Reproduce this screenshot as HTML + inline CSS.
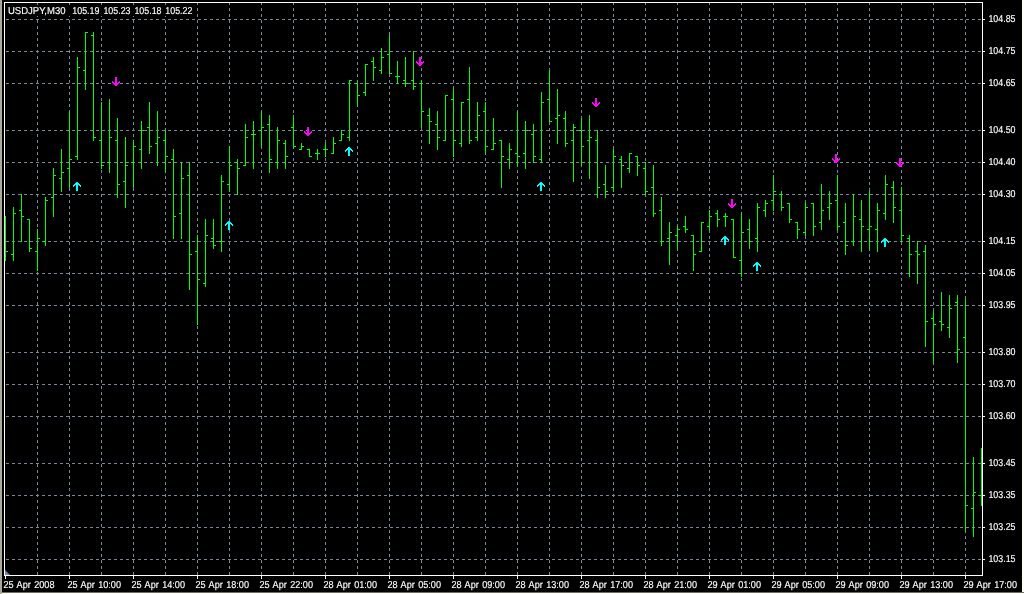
<!DOCTYPE html>
<html lang="en"><head><meta charset="utf-8"><title>USDJPY,M30</title>
<style>html,body{margin:0;padding:0;background:#000;overflow:hidden}svg{display:block}text{font-family:"Liberation Sans",sans-serif;font-size:10px;fill:#fff;stroke:#fff;stroke-width:0.15px}</style></head><body>
<svg width="1024" height="594" viewBox="0 0 1024 594" shape-rendering="crispEdges">
<rect x="0" y="0" width="1024" height="594" fill="#000"/>
<rect x="0" y="0" width="2" height="594" fill="#aca899"/>
<rect x="1022" y="0" width="2" height="594" fill="#fffff4"/>
<rect x="2" y="592" width="1022" height="1" fill="#6e6e68"/>
<rect x="2" y="593" width="1022" height="1" fill="#fffff4"/>
<g stroke="#778899" stroke-width="1" stroke-dasharray="3 3" fill="none">
<line x1="6" y1="19.5" x2="982" y2="19.5"/>
<line x1="6" y1="51.5" x2="982" y2="51.5"/>
<line x1="6" y1="83.5" x2="982" y2="83.5"/>
<line x1="6" y1="130.5" x2="982" y2="130.5"/>
<line x1="6" y1="162.5" x2="982" y2="162.5"/>
<line x1="6" y1="194.5" x2="982" y2="194.5"/>
<line x1="6" y1="241.5" x2="982" y2="241.5"/>
<line x1="6" y1="273.5" x2="982" y2="273.5"/>
<line x1="6" y1="305.5" x2="982" y2="305.5"/>
<line x1="6" y1="352.5" x2="982" y2="352.5"/>
<line x1="6" y1="384.5" x2="982" y2="384.5"/>
<line x1="6" y1="416.5" x2="982" y2="416.5"/>
<line x1="6" y1="463.5" x2="982" y2="463.5"/>
<line x1="6" y1="495.5" x2="982" y2="495.5"/>
<line x1="6" y1="527.5" x2="982" y2="527.5"/>
<line x1="6" y1="559.5" x2="982" y2="559.5"/>
<line x1="37.5" y1="2" x2="37.5" y2="575"/>
<line x1="69.5" y1="2" x2="69.5" y2="575"/>
<line x1="101.5" y1="2" x2="101.5" y2="575"/>
<line x1="133.5" y1="2" x2="133.5" y2="575"/>
<line x1="165.5" y1="2" x2="165.5" y2="575"/>
<line x1="197.5" y1="2" x2="197.5" y2="575"/>
<line x1="229.5" y1="2" x2="229.5" y2="575"/>
<line x1="261.5" y1="2" x2="261.5" y2="575"/>
<line x1="293.5" y1="2" x2="293.5" y2="575"/>
<line x1="325.5" y1="2" x2="325.5" y2="575"/>
<line x1="357.5" y1="2" x2="357.5" y2="575"/>
<line x1="389.5" y1="2" x2="389.5" y2="575"/>
<line x1="421.5" y1="2" x2="421.5" y2="575"/>
<line x1="453.5" y1="2" x2="453.5" y2="575"/>
<line x1="485.5" y1="2" x2="485.5" y2="575"/>
<line x1="517.5" y1="2" x2="517.5" y2="575"/>
<line x1="549.5" y1="2" x2="549.5" y2="575"/>
<line x1="581.5" y1="2" x2="581.5" y2="575"/>
<line x1="613.5" y1="2" x2="613.5" y2="575"/>
<line x1="645.5" y1="2" x2="645.5" y2="575"/>
<line x1="677.5" y1="2" x2="677.5" y2="575"/>
<line x1="709.5" y1="2" x2="709.5" y2="575"/>
<line x1="741.5" y1="2" x2="741.5" y2="575"/>
<line x1="773.5" y1="2" x2="773.5" y2="575"/>
<line x1="805.5" y1="2" x2="805.5" y2="575"/>
<line x1="837.5" y1="2" x2="837.5" y2="575"/>
<line x1="869.5" y1="2" x2="869.5" y2="575"/>
<line x1="901.5" y1="2" x2="901.5" y2="575"/>
<line x1="933.5" y1="2" x2="933.5" y2="575"/>
<line x1="965.5" y1="2" x2="965.5" y2="575"/>
</g>
<g fill="#00ff00">
<rect x="5" y="216" width="1" height="45"/>
<rect x="6" y="251" width="2" height="1"/>
<rect x="13" y="207" width="1" height="54"/>
<rect x="11" y="254" width="2" height="1"/>
<rect x="14" y="213" width="2" height="1"/>
<rect x="21" y="194" width="1" height="48"/>
<rect x="19" y="210" width="2" height="1"/>
<rect x="22" y="216" width="2" height="1"/>
<rect x="29" y="219" width="1" height="33"/>
<rect x="27" y="219" width="2" height="1"/>
<rect x="30" y="248" width="2" height="1"/>
<rect x="37" y="229" width="1" height="42"/>
<rect x="35" y="251" width="2" height="1"/>
<rect x="38" y="238" width="2" height="1"/>
<rect x="45" y="197" width="1" height="49"/>
<rect x="43" y="241" width="2" height="1"/>
<rect x="46" y="200" width="2" height="1"/>
<rect x="53" y="168" width="1" height="49"/>
<rect x="51" y="197" width="2" height="1"/>
<rect x="54" y="175" width="2" height="1"/>
<rect x="61" y="149" width="1" height="43"/>
<rect x="59" y="178" width="2" height="1"/>
<rect x="62" y="172" width="2" height="1"/>
<rect x="69" y="111" width="1" height="77"/>
<rect x="67" y="168" width="2" height="1"/>
<rect x="70" y="159" width="2" height="1"/>
<rect x="77" y="57" width="1" height="103"/>
<rect x="75" y="156" width="2" height="1"/>
<rect x="78" y="67" width="2" height="1"/>
<rect x="85" y="32" width="1" height="58"/>
<rect x="83" y="70" width="2" height="1"/>
<rect x="86" y="32" width="2" height="1"/>
<rect x="93" y="32" width="1" height="109"/>
<rect x="91" y="35" width="2" height="1"/>
<rect x="94" y="137" width="2" height="1"/>
<rect x="101" y="102" width="1" height="67"/>
<rect x="99" y="140" width="2" height="1"/>
<rect x="102" y="165" width="2" height="1"/>
<rect x="109" y="99" width="1" height="74"/>
<rect x="107" y="162" width="2" height="1"/>
<rect x="110" y="137" width="2" height="1"/>
<rect x="117" y="118" width="1" height="80"/>
<rect x="115" y="140" width="2" height="1"/>
<rect x="118" y="184" width="2" height="1"/>
<rect x="125" y="137" width="1" height="71"/>
<rect x="123" y="181" width="2" height="1"/>
<rect x="126" y="165" width="2" height="1"/>
<rect x="133" y="140" width="1" height="48"/>
<rect x="131" y="162" width="2" height="1"/>
<rect x="134" y="146" width="2" height="1"/>
<rect x="141" y="121" width="1" height="48"/>
<rect x="139" y="149" width="2" height="1"/>
<rect x="142" y="130" width="2" height="1"/>
<rect x="149" y="102" width="1" height="52"/>
<rect x="147" y="127" width="2" height="1"/>
<rect x="150" y="146" width="2" height="1"/>
<rect x="157" y="111" width="1" height="55"/>
<rect x="155" y="143" width="2" height="1"/>
<rect x="158" y="137" width="2" height="1"/>
<rect x="165" y="130" width="1" height="43"/>
<rect x="163" y="140" width="2" height="1"/>
<rect x="166" y="156" width="2" height="1"/>
<rect x="173" y="149" width="1" height="90"/>
<rect x="171" y="159" width="2" height="1"/>
<rect x="174" y="216" width="2" height="1"/>
<rect x="181" y="162" width="1" height="77"/>
<rect x="179" y="213" width="2" height="1"/>
<rect x="182" y="178" width="2" height="1"/>
<rect x="189" y="162" width="1" height="128"/>
<rect x="187" y="175" width="2" height="1"/>
<rect x="190" y="254" width="2" height="1"/>
<rect x="197" y="235" width="1" height="90"/>
<rect x="195" y="251" width="2" height="1"/>
<rect x="198" y="279" width="2" height="1"/>
<rect x="205" y="219" width="1" height="68"/>
<rect x="203" y="283" width="2" height="1"/>
<rect x="206" y="235" width="2" height="1"/>
<rect x="213" y="219" width="1" height="30"/>
<rect x="211" y="238" width="2" height="1"/>
<rect x="214" y="245" width="2" height="1"/>
<rect x="221" y="175" width="1" height="77"/>
<rect x="219" y="241" width="2" height="1"/>
<rect x="222" y="181" width="2" height="1"/>
<rect x="229" y="146" width="1" height="46"/>
<rect x="227" y="184" width="2" height="1"/>
<rect x="230" y="165" width="2" height="1"/>
<rect x="237" y="159" width="1" height="36"/>
<rect x="235" y="162" width="2" height="1"/>
<rect x="238" y="168" width="2" height="1"/>
<rect x="245" y="124" width="1" height="42"/>
<rect x="243" y="165" width="2" height="1"/>
<rect x="246" y="137" width="2" height="1"/>
<rect x="253" y="121" width="1" height="48"/>
<rect x="251" y="134" width="2" height="1"/>
<rect x="254" y="134" width="2" height="1"/>
<rect x="261" y="111" width="1" height="36"/>
<rect x="259" y="130" width="2" height="1"/>
<rect x="262" y="127" width="2" height="1"/>
<rect x="269" y="115" width="1" height="58"/>
<rect x="267" y="124" width="2" height="1"/>
<rect x="270" y="159" width="2" height="1"/>
<rect x="277" y="127" width="1" height="42"/>
<rect x="275" y="162" width="2" height="1"/>
<rect x="278" y="140" width="2" height="1"/>
<rect x="285" y="140" width="1" height="29"/>
<rect x="283" y="143" width="2" height="1"/>
<rect x="286" y="156" width="2" height="1"/>
<rect x="293" y="115" width="1" height="32"/>
<rect x="291" y="127" width="2" height="1"/>
<rect x="294" y="146" width="2" height="1"/>
<rect x="301" y="143" width="1" height="7"/>
<rect x="299" y="149" width="2" height="1"/>
<rect x="302" y="146" width="2" height="1"/>
<rect x="309" y="149" width="1" height="8"/>
<rect x="307" y="149" width="2" height="1"/>
<rect x="310" y="156" width="2" height="1"/>
<rect x="317" y="149" width="1" height="11"/>
<rect x="315" y="153" width="2" height="1"/>
<rect x="318" y="153" width="2" height="1"/>
<rect x="325" y="143" width="1" height="14"/>
<rect x="323" y="149" width="2" height="1"/>
<rect x="326" y="149" width="2" height="1"/>
<rect x="333" y="137" width="1" height="17"/>
<rect x="331" y="153" width="2" height="1"/>
<rect x="334" y="143" width="2" height="1"/>
<rect x="341" y="130" width="1" height="11"/>
<rect x="339" y="140" width="2" height="1"/>
<rect x="342" y="134" width="2" height="1"/>
<rect x="349" y="80" width="1" height="61"/>
<rect x="347" y="137" width="2" height="1"/>
<rect x="350" y="80" width="2" height="1"/>
<rect x="357" y="83" width="1" height="23"/>
<rect x="355" y="83" width="2" height="1"/>
<rect x="358" y="95" width="2" height="1"/>
<rect x="365" y="64" width="1" height="32"/>
<rect x="363" y="92" width="2" height="1"/>
<rect x="366" y="64" width="2" height="1"/>
<rect x="373" y="57" width="1" height="24"/>
<rect x="371" y="61" width="2" height="1"/>
<rect x="374" y="67" width="2" height="1"/>
<rect x="381" y="48" width="1" height="26"/>
<rect x="379" y="70" width="2" height="1"/>
<rect x="382" y="57" width="2" height="1"/>
<rect x="389" y="35" width="1" height="39"/>
<rect x="387" y="54" width="2" height="1"/>
<rect x="390" y="73" width="2" height="1"/>
<rect x="397" y="61" width="1" height="23"/>
<rect x="395" y="76" width="2" height="1"/>
<rect x="398" y="76" width="2" height="1"/>
<rect x="405" y="57" width="1" height="30"/>
<rect x="403" y="80" width="2" height="1"/>
<rect x="406" y="83" width="2" height="1"/>
<rect x="413" y="51" width="1" height="39"/>
<rect x="411" y="80" width="2" height="1"/>
<rect x="414" y="86" width="2" height="1"/>
<rect x="421" y="80" width="1" height="48"/>
<rect x="419" y="83" width="2" height="1"/>
<rect x="422" y="111" width="2" height="1"/>
<rect x="429" y="108" width="1" height="36"/>
<rect x="427" y="115" width="2" height="1"/>
<rect x="430" y="121" width="2" height="1"/>
<rect x="437" y="111" width="1" height="39"/>
<rect x="435" y="124" width="2" height="1"/>
<rect x="438" y="137" width="2" height="1"/>
<rect x="445" y="95" width="1" height="46"/>
<rect x="443" y="140" width="2" height="1"/>
<rect x="446" y="95" width="2" height="1"/>
<rect x="453" y="89" width="1" height="68"/>
<rect x="451" y="99" width="2" height="1"/>
<rect x="454" y="140" width="2" height="1"/>
<rect x="461" y="102" width="1" height="45"/>
<rect x="459" y="143" width="2" height="1"/>
<rect x="462" y="102" width="2" height="1"/>
<rect x="469" y="67" width="1" height="77"/>
<rect x="467" y="99" width="2" height="1"/>
<rect x="470" y="140" width="2" height="1"/>
<rect x="477" y="102" width="1" height="39"/>
<rect x="475" y="137" width="2" height="1"/>
<rect x="478" y="115" width="2" height="1"/>
<rect x="485" y="102" width="1" height="52"/>
<rect x="483" y="111" width="2" height="1"/>
<rect x="486" y="146" width="2" height="1"/>
<rect x="493" y="118" width="1" height="32"/>
<rect x="491" y="149" width="2" height="1"/>
<rect x="494" y="143" width="2" height="1"/>
<rect x="501" y="140" width="1" height="48"/>
<rect x="499" y="140" width="2" height="1"/>
<rect x="502" y="156" width="2" height="1"/>
<rect x="509" y="143" width="1" height="26"/>
<rect x="507" y="159" width="2" height="1"/>
<rect x="510" y="149" width="2" height="1"/>
<rect x="517" y="111" width="1" height="55"/>
<rect x="515" y="153" width="2" height="1"/>
<rect x="518" y="156" width="2" height="1"/>
<rect x="525" y="121" width="1" height="48"/>
<rect x="523" y="153" width="2" height="1"/>
<rect x="526" y="130" width="2" height="1"/>
<rect x="533" y="124" width="1" height="39"/>
<rect x="531" y="134" width="2" height="1"/>
<rect x="534" y="156" width="2" height="1"/>
<rect x="541" y="92" width="1" height="71"/>
<rect x="539" y="159" width="2" height="1"/>
<rect x="542" y="102" width="2" height="1"/>
<rect x="549" y="70" width="1" height="52"/>
<rect x="547" y="99" width="2" height="1"/>
<rect x="550" y="121" width="2" height="1"/>
<rect x="557" y="89" width="1" height="55"/>
<rect x="555" y="118" width="2" height="1"/>
<rect x="558" y="115" width="2" height="1"/>
<rect x="565" y="111" width="1" height="36"/>
<rect x="563" y="118" width="2" height="1"/>
<rect x="566" y="143" width="2" height="1"/>
<rect x="573" y="124" width="1" height="58"/>
<rect x="571" y="140" width="2" height="1"/>
<rect x="574" y="127" width="2" height="1"/>
<rect x="581" y="118" width="1" height="48"/>
<rect x="579" y="130" width="2" height="1"/>
<rect x="582" y="146" width="2" height="1"/>
<rect x="589" y="115" width="1" height="64"/>
<rect x="587" y="140" width="2" height="1"/>
<rect x="590" y="137" width="2" height="1"/>
<rect x="597" y="130" width="1" height="68"/>
<rect x="595" y="140" width="2" height="1"/>
<rect x="598" y="187" width="2" height="1"/>
<rect x="605" y="165" width="1" height="33"/>
<rect x="603" y="184" width="2" height="1"/>
<rect x="606" y="191" width="2" height="1"/>
<rect x="613" y="149" width="1" height="43"/>
<rect x="611" y="187" width="2" height="1"/>
<rect x="614" y="156" width="2" height="1"/>
<rect x="621" y="156" width="1" height="32"/>
<rect x="619" y="159" width="2" height="1"/>
<rect x="622" y="165" width="2" height="1"/>
<rect x="629" y="153" width="1" height="20"/>
<rect x="627" y="168" width="2" height="1"/>
<rect x="630" y="153" width="2" height="1"/>
<rect x="637" y="156" width="1" height="20"/>
<rect x="635" y="156" width="2" height="1"/>
<rect x="638" y="165" width="2" height="1"/>
<rect x="645" y="162" width="1" height="33"/>
<rect x="643" y="168" width="2" height="1"/>
<rect x="646" y="191" width="2" height="1"/>
<rect x="653" y="165" width="1" height="52"/>
<rect x="651" y="187" width="2" height="1"/>
<rect x="654" y="213" width="2" height="1"/>
<rect x="661" y="197" width="1" height="49"/>
<rect x="659" y="210" width="2" height="1"/>
<rect x="662" y="241" width="2" height="1"/>
<rect x="669" y="222" width="1" height="43"/>
<rect x="667" y="238" width="2" height="1"/>
<rect x="670" y="232" width="2" height="1"/>
<rect x="677" y="226" width="1" height="23"/>
<rect x="675" y="235" width="2" height="1"/>
<rect x="678" y="229" width="2" height="1"/>
<rect x="685" y="216" width="1" height="17"/>
<rect x="683" y="226" width="2" height="1"/>
<rect x="686" y="229" width="2" height="1"/>
<rect x="693" y="235" width="1" height="36"/>
<rect x="691" y="235" width="2" height="1"/>
<rect x="694" y="254" width="2" height="1"/>
<rect x="701" y="222" width="1" height="30"/>
<rect x="699" y="251" width="2" height="1"/>
<rect x="702" y="222" width="2" height="1"/>
<rect x="709" y="210" width="1" height="20"/>
<rect x="707" y="226" width="2" height="1"/>
<rect x="710" y="216" width="2" height="1"/>
<rect x="717" y="210" width="1" height="17"/>
<rect x="715" y="213" width="2" height="1"/>
<rect x="718" y="219" width="2" height="1"/>
<rect x="725" y="213" width="1" height="14"/>
<rect x="723" y="216" width="2" height="1"/>
<rect x="726" y="216" width="2" height="1"/>
<rect x="733" y="219" width="1" height="39"/>
<rect x="731" y="219" width="2" height="1"/>
<rect x="734" y="257" width="2" height="1"/>
<rect x="741" y="213" width="1" height="64"/>
<rect x="739" y="260" width="2" height="1"/>
<rect x="742" y="232" width="2" height="1"/>
<rect x="749" y="219" width="1" height="30"/>
<rect x="747" y="229" width="2" height="1"/>
<rect x="750" y="241" width="2" height="1"/>
<rect x="757" y="203" width="1" height="49"/>
<rect x="755" y="238" width="2" height="1"/>
<rect x="758" y="207" width="2" height="1"/>
<rect x="765" y="200" width="1" height="17"/>
<rect x="763" y="210" width="2" height="1"/>
<rect x="766" y="203" width="2" height="1"/>
<rect x="773" y="175" width="1" height="36"/>
<rect x="771" y="200" width="2" height="1"/>
<rect x="774" y="191" width="2" height="1"/>
<rect x="781" y="191" width="1" height="20"/>
<rect x="779" y="194" width="2" height="1"/>
<rect x="782" y="207" width="2" height="1"/>
<rect x="789" y="203" width="1" height="20"/>
<rect x="787" y="203" width="2" height="1"/>
<rect x="790" y="219" width="2" height="1"/>
<rect x="797" y="222" width="1" height="17"/>
<rect x="795" y="222" width="2" height="1"/>
<rect x="798" y="229" width="2" height="1"/>
<rect x="805" y="203" width="1" height="33"/>
<rect x="803" y="232" width="2" height="1"/>
<rect x="806" y="207" width="2" height="1"/>
<rect x="813" y="203" width="1" height="33"/>
<rect x="811" y="203" width="2" height="1"/>
<rect x="814" y="226" width="2" height="1"/>
<rect x="821" y="184" width="1" height="46"/>
<rect x="819" y="222" width="2" height="1"/>
<rect x="822" y="210" width="2" height="1"/>
<rect x="829" y="191" width="1" height="29"/>
<rect x="827" y="207" width="2" height="1"/>
<rect x="830" y="203" width="2" height="1"/>
<rect x="837" y="175" width="1" height="55"/>
<rect x="835" y="200" width="2" height="1"/>
<rect x="838" y="226" width="2" height="1"/>
<rect x="845" y="203" width="1" height="52"/>
<rect x="843" y="222" width="2" height="1"/>
<rect x="846" y="245" width="2" height="1"/>
<rect x="853" y="194" width="1" height="52"/>
<rect x="851" y="241" width="2" height="1"/>
<rect x="854" y="216" width="2" height="1"/>
<rect x="861" y="200" width="1" height="52"/>
<rect x="859" y="219" width="2" height="1"/>
<rect x="862" y="226" width="2" height="1"/>
<rect x="869" y="191" width="1" height="58"/>
<rect x="867" y="229" width="2" height="1"/>
<rect x="870" y="226" width="2" height="1"/>
<rect x="877" y="203" width="1" height="49"/>
<rect x="875" y="229" width="2" height="1"/>
<rect x="878" y="210" width="2" height="1"/>
<rect x="885" y="175" width="1" height="45"/>
<rect x="883" y="213" width="2" height="1"/>
<rect x="886" y="184" width="2" height="1"/>
<rect x="893" y="181" width="1" height="42"/>
<rect x="891" y="187" width="2" height="1"/>
<rect x="894" y="207" width="2" height="1"/>
<rect x="901" y="187" width="1" height="55"/>
<rect x="899" y="210" width="2" height="1"/>
<rect x="902" y="235" width="2" height="1"/>
<rect x="909" y="235" width="1" height="42"/>
<rect x="907" y="238" width="2" height="1"/>
<rect x="910" y="254" width="2" height="1"/>
<rect x="917" y="241" width="1" height="43"/>
<rect x="915" y="251" width="2" height="1"/>
<rect x="918" y="254" width="2" height="1"/>
<rect x="925" y="245" width="1" height="102"/>
<rect x="923" y="251" width="2" height="1"/>
<rect x="926" y="321" width="2" height="1"/>
<rect x="933" y="311" width="1" height="52"/>
<rect x="931" y="318" width="2" height="1"/>
<rect x="934" y="324" width="2" height="1"/>
<rect x="941" y="292" width="1" height="39"/>
<rect x="939" y="321" width="2" height="1"/>
<rect x="942" y="324" width="2" height="1"/>
<rect x="949" y="295" width="1" height="43"/>
<rect x="947" y="327" width="2" height="1"/>
<rect x="950" y="308" width="2" height="1"/>
<rect x="957" y="295" width="1" height="68"/>
<rect x="955" y="302" width="2" height="1"/>
<rect x="958" y="349" width="2" height="1"/>
<rect x="965" y="299" width="1" height="232"/>
<rect x="963" y="337" width="2" height="1"/>
<rect x="966" y="505" width="2" height="1"/>
<rect x="973" y="457" width="1" height="80"/>
<rect x="971" y="508" width="2" height="1"/>
<rect x="974" y="492" width="2" height="1"/>
<rect x="981" y="448" width="1" height="58"/>
<rect x="979" y="495" width="2" height="1"/>
</g>
<rect x="6" y="5" width="189" height="11" fill="#000"/>
<polygon points="5,570 5,575 10,575" fill="#778899" shape-rendering="auto"/>
<g fill="#fff">
<rect x="4" y="2" width="979" height="1"/>
<rect x="4" y="2" width="1" height="574"/>
<rect x="982" y="2" width="1" height="574"/>
<rect x="4" y="575" width="979" height="1"/>
<rect x="983" y="19" width="2" height="1"/>
<rect x="983" y="51" width="2" height="1"/>
<rect x="983" y="83" width="2" height="1"/>
<rect x="983" y="130" width="2" height="1"/>
<rect x="983" y="162" width="2" height="1"/>
<rect x="983" y="194" width="2" height="1"/>
<rect x="983" y="241" width="2" height="1"/>
<rect x="983" y="273" width="2" height="1"/>
<rect x="983" y="305" width="2" height="1"/>
<rect x="983" y="352" width="2" height="1"/>
<rect x="983" y="384" width="2" height="1"/>
<rect x="983" y="416" width="2" height="1"/>
<rect x="983" y="463" width="2" height="1"/>
<rect x="983" y="495" width="2" height="1"/>
<rect x="983" y="527" width="2" height="1"/>
<rect x="983" y="559" width="2" height="1"/>
<rect x="5" y="576" width="1" height="3"/>
<rect x="69" y="576" width="1" height="3"/>
<rect x="133" y="576" width="1" height="3"/>
<rect x="197" y="576" width="1" height="3"/>
<rect x="261" y="576" width="1" height="3"/>
<rect x="325" y="576" width="1" height="3"/>
<rect x="389" y="576" width="1" height="3"/>
<rect x="453" y="576" width="1" height="3"/>
<rect x="517" y="576" width="1" height="3"/>
<rect x="581" y="576" width="1" height="3"/>
<rect x="645" y="576" width="1" height="3"/>
<rect x="709" y="576" width="1" height="3"/>
<rect x="773" y="576" width="1" height="3"/>
<rect x="837" y="576" width="1" height="3"/>
<rect x="901" y="576" width="1" height="3"/>
<rect x="965" y="576" width="1" height="3"/>
</g>
<g fill="#ff00ff"><rect x="115" y="77" width="2" height="1"/><rect x="115" y="78" width="2" height="1"/><rect x="115" y="79" width="2" height="1"/><rect x="115" y="80" width="2" height="1"/><rect x="112" y="81" width="1" height="1"/><rect x="115" y="81" width="2" height="1"/><rect x="119" y="81" width="1" height="1"/><rect x="112" y="82" width="2" height="1"/><rect x="115" y="82" width="2" height="1"/><rect x="118" y="82" width="2" height="1"/><rect x="113" y="83" width="6" height="1"/><rect x="114" y="84" width="4" height="1"/><rect x="115" y="85" width="2" height="1"/></g>
<g fill="#ff00ff"><rect x="307" y="127" width="2" height="1"/><rect x="307" y="128" width="2" height="1"/><rect x="307" y="129" width="2" height="1"/><rect x="307" y="130" width="2" height="1"/><rect x="304" y="131" width="1" height="1"/><rect x="307" y="131" width="2" height="1"/><rect x="311" y="131" width="1" height="1"/><rect x="304" y="132" width="2" height="1"/><rect x="307" y="132" width="2" height="1"/><rect x="310" y="132" width="2" height="1"/><rect x="305" y="133" width="6" height="1"/><rect x="306" y="134" width="4" height="1"/><rect x="307" y="135" width="2" height="1"/></g>
<g fill="#ff00ff"><rect x="419" y="57" width="2" height="1"/><rect x="419" y="58" width="2" height="1"/><rect x="419" y="59" width="2" height="1"/><rect x="419" y="60" width="2" height="1"/><rect x="416" y="61" width="1" height="1"/><rect x="419" y="61" width="2" height="1"/><rect x="423" y="61" width="1" height="1"/><rect x="416" y="62" width="2" height="1"/><rect x="419" y="62" width="2" height="1"/><rect x="422" y="62" width="2" height="1"/><rect x="417" y="63" width="6" height="1"/><rect x="418" y="64" width="4" height="1"/><rect x="419" y="65" width="2" height="1"/></g>
<g fill="#ff00ff"><rect x="595" y="98" width="2" height="1"/><rect x="595" y="99" width="2" height="1"/><rect x="595" y="100" width="2" height="1"/><rect x="595" y="101" width="2" height="1"/><rect x="592" y="102" width="1" height="1"/><rect x="595" y="102" width="2" height="1"/><rect x="599" y="102" width="1" height="1"/><rect x="592" y="103" width="2" height="1"/><rect x="595" y="103" width="2" height="1"/><rect x="598" y="103" width="2" height="1"/><rect x="593" y="104" width="6" height="1"/><rect x="594" y="105" width="4" height="1"/><rect x="595" y="106" width="2" height="1"/></g>
<g fill="#ff00ff"><rect x="731" y="199" width="2" height="1"/><rect x="731" y="200" width="2" height="1"/><rect x="731" y="201" width="2" height="1"/><rect x="731" y="202" width="2" height="1"/><rect x="728" y="203" width="1" height="1"/><rect x="731" y="203" width="2" height="1"/><rect x="735" y="203" width="1" height="1"/><rect x="728" y="204" width="2" height="1"/><rect x="731" y="204" width="2" height="1"/><rect x="734" y="204" width="2" height="1"/><rect x="729" y="205" width="6" height="1"/><rect x="730" y="206" width="4" height="1"/><rect x="731" y="207" width="2" height="1"/></g>
<g fill="#ff00ff"><rect x="835" y="154" width="2" height="1"/><rect x="835" y="155" width="2" height="1"/><rect x="835" y="156" width="2" height="1"/><rect x="835" y="157" width="2" height="1"/><rect x="832" y="158" width="1" height="1"/><rect x="835" y="158" width="2" height="1"/><rect x="839" y="158" width="1" height="1"/><rect x="832" y="159" width="2" height="1"/><rect x="835" y="159" width="2" height="1"/><rect x="838" y="159" width="2" height="1"/><rect x="833" y="160" width="6" height="1"/><rect x="834" y="161" width="4" height="1"/><rect x="835" y="162" width="2" height="1"/></g>
<g fill="#ff00ff"><rect x="899" y="158" width="2" height="1"/><rect x="899" y="159" width="2" height="1"/><rect x="899" y="160" width="2" height="1"/><rect x="899" y="161" width="2" height="1"/><rect x="896" y="162" width="1" height="1"/><rect x="899" y="162" width="2" height="1"/><rect x="903" y="162" width="1" height="1"/><rect x="896" y="163" width="2" height="1"/><rect x="899" y="163" width="2" height="1"/><rect x="902" y="163" width="2" height="1"/><rect x="897" y="164" width="6" height="1"/><rect x="898" y="165" width="4" height="1"/><rect x="899" y="166" width="2" height="1"/></g>
<g fill="#00ffff"><rect x="76" y="182" width="2" height="1"/><rect x="75" y="183" width="4" height="1"/><rect x="74" y="184" width="6" height="1"/><rect x="73" y="185" width="2" height="1"/><rect x="76" y="185" width="2" height="1"/><rect x="79" y="185" width="2" height="1"/><rect x="73" y="186" width="1" height="1"/><rect x="76" y="186" width="2" height="1"/><rect x="80" y="186" width="1" height="1"/><rect x="76" y="187" width="2" height="1"/><rect x="76" y="188" width="2" height="1"/><rect x="76" y="189" width="2" height="1"/><rect x="76" y="190" width="2" height="1"/></g>
<g fill="#00ffff"><rect x="228" y="221" width="2" height="1"/><rect x="227" y="222" width="4" height="1"/><rect x="226" y="223" width="6" height="1"/><rect x="225" y="224" width="2" height="1"/><rect x="228" y="224" width="2" height="1"/><rect x="231" y="224" width="2" height="1"/><rect x="225" y="225" width="1" height="1"/><rect x="228" y="225" width="2" height="1"/><rect x="232" y="225" width="1" height="1"/><rect x="228" y="226" width="2" height="1"/><rect x="228" y="227" width="2" height="1"/><rect x="228" y="228" width="2" height="1"/><rect x="228" y="229" width="2" height="1"/></g>
<g fill="#00ffff"><rect x="348" y="147" width="2" height="1"/><rect x="347" y="148" width="4" height="1"/><rect x="346" y="149" width="6" height="1"/><rect x="345" y="150" width="2" height="1"/><rect x="348" y="150" width="2" height="1"/><rect x="351" y="150" width="2" height="1"/><rect x="345" y="151" width="1" height="1"/><rect x="348" y="151" width="2" height="1"/><rect x="352" y="151" width="1" height="1"/><rect x="348" y="152" width="2" height="1"/><rect x="348" y="153" width="2" height="1"/><rect x="348" y="154" width="2" height="1"/><rect x="348" y="155" width="2" height="1"/></g>
<g fill="#00ffff"><rect x="540" y="182" width="2" height="1"/><rect x="539" y="183" width="4" height="1"/><rect x="538" y="184" width="6" height="1"/><rect x="537" y="185" width="2" height="1"/><rect x="540" y="185" width="2" height="1"/><rect x="543" y="185" width="2" height="1"/><rect x="537" y="186" width="1" height="1"/><rect x="540" y="186" width="2" height="1"/><rect x="544" y="186" width="1" height="1"/><rect x="540" y="187" width="2" height="1"/><rect x="540" y="188" width="2" height="1"/><rect x="540" y="189" width="2" height="1"/><rect x="540" y="190" width="2" height="1"/></g>
<g fill="#00ffff"><rect x="724" y="236" width="2" height="1"/><rect x="723" y="237" width="4" height="1"/><rect x="722" y="238" width="6" height="1"/><rect x="721" y="239" width="2" height="1"/><rect x="724" y="239" width="2" height="1"/><rect x="727" y="239" width="2" height="1"/><rect x="721" y="240" width="1" height="1"/><rect x="724" y="240" width="2" height="1"/><rect x="728" y="240" width="1" height="1"/><rect x="724" y="241" width="2" height="1"/><rect x="724" y="242" width="2" height="1"/><rect x="724" y="243" width="2" height="1"/><rect x="724" y="244" width="2" height="1"/></g>
<g fill="#00ffff"><rect x="756" y="262" width="2" height="1"/><rect x="755" y="263" width="4" height="1"/><rect x="754" y="264" width="6" height="1"/><rect x="753" y="265" width="2" height="1"/><rect x="756" y="265" width="2" height="1"/><rect x="759" y="265" width="2" height="1"/><rect x="753" y="266" width="1" height="1"/><rect x="756" y="266" width="2" height="1"/><rect x="760" y="266" width="1" height="1"/><rect x="756" y="267" width="2" height="1"/><rect x="756" y="268" width="2" height="1"/><rect x="756" y="269" width="2" height="1"/><rect x="756" y="270" width="2" height="1"/></g>
<g fill="#00ffff"><rect x="884" y="238" width="2" height="1"/><rect x="883" y="239" width="4" height="1"/><rect x="882" y="240" width="6" height="1"/><rect x="881" y="241" width="2" height="1"/><rect x="884" y="241" width="2" height="1"/><rect x="887" y="241" width="2" height="1"/><rect x="881" y="242" width="1" height="1"/><rect x="884" y="242" width="2" height="1"/><rect x="888" y="242" width="1" height="1"/><rect x="884" y="243" width="2" height="1"/><rect x="884" y="244" width="2" height="1"/><rect x="884" y="245" width="2" height="1"/><rect x="884" y="246" width="2" height="1"/></g>
<g shape-rendering="auto" text-rendering="geometricPrecision" style="will-change:opacity">
<text x="8" y="14" textLength="57.5" lengthAdjust="spacingAndGlyphs">USDJPY,M30</text>
<text x="72.3" y="14" textLength="27.1" lengthAdjust="spacingAndGlyphs">105.19</text>
<text x="103.4" y="14" textLength="27.1" lengthAdjust="spacingAndGlyphs">105.23</text>
<text x="134.4" y="14" textLength="27.1" lengthAdjust="spacingAndGlyphs">105.18</text>
<text x="165.3" y="14" textLength="27.1" lengthAdjust="spacingAndGlyphs">105.22</text>
<text x="988.4" y="22" textLength="27.1" lengthAdjust="spacingAndGlyphs">104.85</text>
<text x="988.4" y="54" textLength="27.1" lengthAdjust="spacingAndGlyphs">104.75</text>
<text x="988.4" y="86" textLength="27.1" lengthAdjust="spacingAndGlyphs">104.65</text>
<text x="988.4" y="133" textLength="27.1" lengthAdjust="spacingAndGlyphs">104.50</text>
<text x="988.4" y="165" textLength="27.1" lengthAdjust="spacingAndGlyphs">104.40</text>
<text x="988.4" y="197" textLength="27.1" lengthAdjust="spacingAndGlyphs">104.30</text>
<text x="988.4" y="244" textLength="27.1" lengthAdjust="spacingAndGlyphs">104.15</text>
<text x="988.4" y="276" textLength="27.1" lengthAdjust="spacingAndGlyphs">104.05</text>
<text x="988.4" y="308" textLength="27.1" lengthAdjust="spacingAndGlyphs">103.95</text>
<text x="988.4" y="355" textLength="27.1" lengthAdjust="spacingAndGlyphs">103.80</text>
<text x="988.4" y="387" textLength="27.1" lengthAdjust="spacingAndGlyphs">103.70</text>
<text x="988.4" y="419" textLength="27.1" lengthAdjust="spacingAndGlyphs">103.60</text>
<text x="988.4" y="466" textLength="27.1" lengthAdjust="spacingAndGlyphs">103.45</text>
<text x="988.4" y="498" textLength="27.1" lengthAdjust="spacingAndGlyphs">103.35</text>
<text x="988.4" y="530" textLength="27.1" lengthAdjust="spacingAndGlyphs">103.25</text>
<text x="988.4" y="562" textLength="27.1" lengthAdjust="spacingAndGlyphs">103.15</text>
<text x="3.5" y="588" textLength="51" lengthAdjust="spacingAndGlyphs" word-spacing="1">25 Apr 2008</text>
<text x="67.5" y="588" textLength="53.5" lengthAdjust="spacingAndGlyphs" word-spacing="1">25 Apr 10:00</text>
<text x="131.5" y="588" textLength="53.5" lengthAdjust="spacingAndGlyphs" word-spacing="1">25 Apr 14:00</text>
<text x="195.5" y="588" textLength="53.5" lengthAdjust="spacingAndGlyphs" word-spacing="1">25 Apr 18:00</text>
<text x="259.5" y="588" textLength="53.5" lengthAdjust="spacingAndGlyphs" word-spacing="1">25 Apr 22:00</text>
<text x="323.5" y="588" textLength="53.5" lengthAdjust="spacingAndGlyphs" word-spacing="1">28 Apr 01:00</text>
<text x="387.5" y="588" textLength="53.5" lengthAdjust="spacingAndGlyphs" word-spacing="1">28 Apr 05:00</text>
<text x="451.5" y="588" textLength="53.5" lengthAdjust="spacingAndGlyphs" word-spacing="1">28 Apr 09:00</text>
<text x="515.5" y="588" textLength="53.5" lengthAdjust="spacingAndGlyphs" word-spacing="1">28 Apr 13:00</text>
<text x="579.5" y="588" textLength="53.5" lengthAdjust="spacingAndGlyphs" word-spacing="1">28 Apr 17:00</text>
<text x="643.5" y="588" textLength="53.5" lengthAdjust="spacingAndGlyphs" word-spacing="1">28 Apr 21:00</text>
<text x="707.5" y="588" textLength="53.5" lengthAdjust="spacingAndGlyphs" word-spacing="1">29 Apr 01:00</text>
<text x="771.5" y="588" textLength="53.5" lengthAdjust="spacingAndGlyphs" word-spacing="1">29 Apr 05:00</text>
<text x="835.5" y="588" textLength="53.5" lengthAdjust="spacingAndGlyphs" word-spacing="1">29 Apr 09:00</text>
<text x="899.5" y="588" textLength="53.5" lengthAdjust="spacingAndGlyphs" word-spacing="1">29 Apr 13:00</text>
<text x="963.5" y="588" textLength="53.5" lengthAdjust="spacingAndGlyphs" word-spacing="1">29 Apr 17:00</text>
</g>
</svg></body></html>
